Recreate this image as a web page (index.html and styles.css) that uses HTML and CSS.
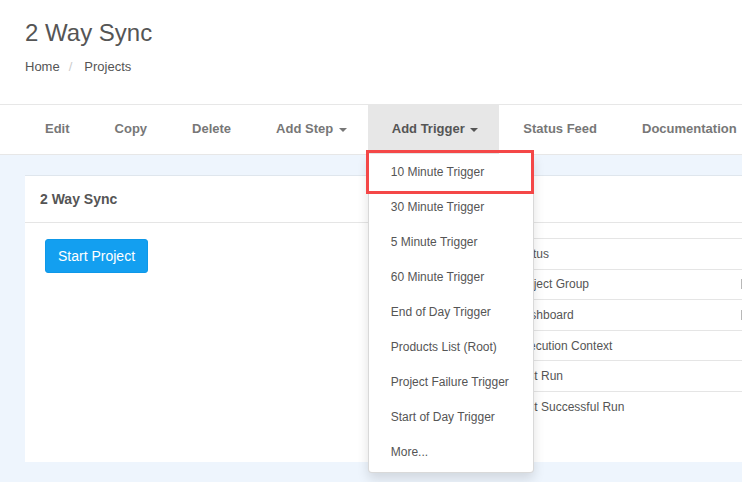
FILE: index.html
```html
<!DOCTYPE html>
<html lang="en">
<head>
<meta charset="utf-8">
<title>2 Way Sync</title>
<link rel="stylesheet" href="styles.css">
</head>
<body>
<header class="page-header">
  <h1 class="title">2 Way Sync</h1>
  <ol class="breadcrumb">
    <li class="crumb">Home</li>
    <li class="crumb-sep">/</li>
    <li class="crumb">Projects</li>
  </ol>
</header>
<nav class="toolbar">
  <ul class="menu">
    <li class="menu-item">Edit</li>
    <li class="menu-item">Copy</li>
    <li class="menu-item">Delete</li>
    <li class="menu-item">Add Step <span class="caret"></span></li>
    <li class="menu-item active">Add Trigger <span class="caret"></span>
      <ul class="dropdown">
        <li class="dropdown-item highlighted">10 Minute Trigger</li>
        <li class="dropdown-item">30 Minute Trigger</li>
        <li class="dropdown-item">5 Minute Trigger</li>
        <li class="dropdown-item">60 Minute Trigger</li>
        <li class="dropdown-item">End of Day Trigger</li>
        <li class="dropdown-item">Products List (Root)</li>
        <li class="dropdown-item">Project Failure Trigger</li>
        <li class="dropdown-item">Start of Day Trigger</li>
        <li class="dropdown-item">More...</li>
      </ul>
    </li>
    <li class="menu-item">Status Feed</li>
    <li class="menu-item">Documentation</li>
  </ul>
</nav>
<main class="main">
  <section class="panel">
    <div class="panel-heading">2 Way Sync</div>
    <div class="panel-body">
      <div class="actions">
        <button class="btn-primary" type="button">Start Project</button>
      </div>
      <div class="details">
        <div class="detail-row"><span class="detail-label">Status</span><span class="detail-value"></span></div>
        <div class="detail-row"><span class="detail-label">Project Group</span><span class="detail-value"><span class="field"></span></span></div>
        <div class="detail-row"><span class="detail-label">Dashboard</span><span class="detail-value"><span class="field"></span></span></div>
        <div class="detail-row"><span class="detail-label">Execution Context</span><span class="detail-value"></span></div>
        <div class="detail-row"><span class="detail-label">Last Run</span><span class="detail-value"></span></div>
        <div class="detail-row last"><span class="detail-label">Last Successful Run</span><span class="detail-value"></span></div>
      </div>
    </div>
  </section>
</main>
</body>
</html>
```

FILE: styles.css
```css
* { box-sizing: border-box; }

html, body {
  margin: 0;
  padding: 0;
}

body {
  font-family: "Liberation Sans", Arial, sans-serif;
  color: #555;
  background: #eef5fd;
  overflow: hidden;
  width: 742px;
  height: 482px;
}

.page-header {
  height: 104px;
  background: #fff;
  padding: 19px 0 0 25px;
}

.title {
  margin: 0;
  font-size: 24px;
  line-height: 28px;
  font-weight: normal;
  color: #555;
}

.breadcrumb {
  list-style: none;
  margin: 11px 0 0;
  padding: 0;
  display: flex;
  font-size: 13px;
  line-height: 18px;
  color: #555;
}

.crumb-sep {
  color: #ccc;
  margin: 0 12px 0 9px;
}

.toolbar {
  background: #fff;
  border-top: 1px solid #e7e7e7;
  border-bottom: 1px solid #e7e7e7;
}

.menu {
  list-style: none;
  margin: 0;
  padding: 0 0 0 21px;
  display: flex;
  white-space: nowrap;
}

.menu-item {
  position: relative;
  height: 49px;
  line-height: 47px;
  padding: 0 21px 0 24px;
  font-size: 13px;
  font-weight: bold;
  color: #777;
}

.menu-item.active {
  background: #e7e7e7;
  color: #555;
}

.caret {
  display: inline-block;
  width: 0;
  height: 0;
  margin-left: 2px;
  vertical-align: middle;
  border-top: 4px solid;
  border-left: 4px solid transparent;
  border-right: 4px solid transparent;
}

.dropdown {
  position: absolute;
  top: 100%;
  left: 0;
  z-index: 10;
  width: 166px;
  list-style: none;
  margin: 0;
  padding: 1px 0 2px;
  background: #fff;
  border: 1px solid rgba(0, 0, 0, 0.15);
  border-top: 0;
  border-radius: 0 0 4px 4px;
  box-shadow: 0 6px 12px rgba(0, 0, 0, 0.12);
  line-height: normal;
}

.dropdown-item {
  position: relative;
  height: 35px;
  line-height: 35px;
  padding-left: 22px;
  font-size: 12px;
  font-weight: normal;
  color: #555;
}

.dropdown-item.highlighted::after {
  content: "";
  position: absolute;
  top: -5px;
  bottom: -4px;
  left: -3px;
  right: -1px;
  border: 3px solid #f44747;
}

.main {
  padding: 20px 0 20px 25px;
}

.panel {
  margin-right: -80px;
  background: #fff;
  border-top: 1px solid #dfe6ed;
}

.panel-heading {
  height: 47px;
  display: flex;
  align-items: center;
  padding-left: 15px;
  font-size: 14px;
  font-weight: bold;
  color: #555;
  border-bottom: 1px solid #e5e5e5;
}

.panel-body {
  display: grid;
  grid-template-columns: 480px 1fr;
  padding-top: 15px;
  height: 239px;
}

.actions {
  padding: 1px 0 0 20px;
}

.btn-primary {
  height: 34px;
  padding: 0 12px;
  border: 1px solid #0e98e8;
  border-radius: 3px;
  background: #139ff0;
  color: #fff;
  font-family: "Liberation Sans", Arial, sans-serif;
  font-size: 14px;
}

.details {
  display: flex;
  flex-direction: column;
}

.detail-row {
  display: grid;
  grid-template-columns: 236px 1fr;
  align-items: center;
  height: 30.6px;
  border-top: 1px solid #e5e5e5;
  font-size: 12px;
  color: #555;
}

.detail-label {
  padding-left: 10px;
}

.detail-value {
  display: flex;
  align-items: center;
}

.field {
  display: inline-block;
  width: 40px;
  height: 10px;
  border-left: 1px solid #b8b8b8;
}
```
